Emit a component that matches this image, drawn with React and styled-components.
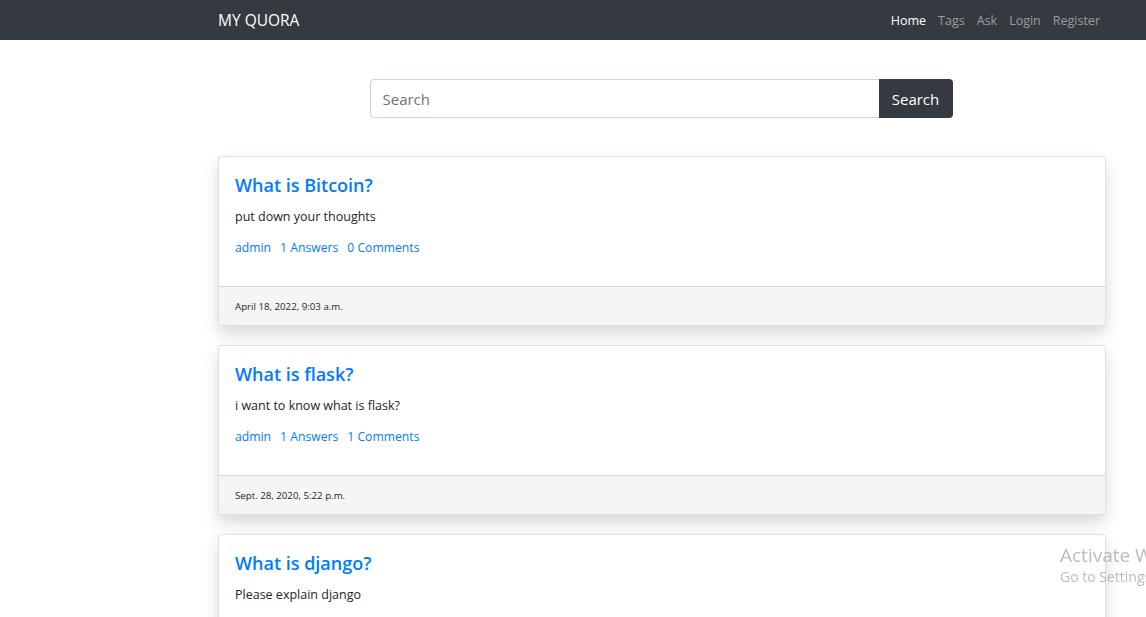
import React from "react";
import styled, { createGlobalStyle } from "styled-components";

const GlobalStyle = createGlobalStyle`
	* {
		box-sizing: border-box;
	}
	body {
		margin: 0;
		background: #fff;
		font-family: "Open Sans", "Liberation Sans", sans-serif;
		color: #212529;
		overflow: hidden;
	}
`;

const questions = [
	{
		title: "What is Bitcoin?",
		body: "put down your thoughts",
		author: "admin",
		answers: 1,
		comments: 0,
		date: "April 18, 2022, 9:03 a.m.",
	},
	{
		title: "What is flask?",
		body: "i want to know what is flask?",
		author: "admin",
		answers: 1,
		comments: 1,
		date: "Sept. 28, 2020, 5:22 p.m.",
	},
	{
		title: "What is django?",
		body: "Please explain django",
		author: "admin",
		answers: 1,
		comments: 0,
		date: "Sept. 27, 2020, 8:10 p.m.",
	},
];

const App = () => {
	const navLinks = ["Home", "Tags", "Ask", "Login", "Register"];

	return (
		<>
			<GlobalStyle />
			<Navbar>
				<NavInner>
					<Brand href="#">MY QUORA</Brand>
					<NavList>
						{navLinks.map((link, i) => (
							<NavLink key={link} href="#" $active={i === 0}>
								{link}
							</NavLink>
						))}
					</NavList>
				</NavInner>
			</Navbar>
			<Container>
				<SearchForm onSubmit={(e) => e.preventDefault()}>
					<SearchInput type="text" placeholder="Search" />
					<SearchButton type="submit">Search</SearchButton>
				</SearchForm>
				{questions.map((q) => (
					<Card key={q.title}>
						<CardBody>
							<CardTitle href="#">{q.title}</CardTitle>
							<CardText>{q.body}</CardText>
							<MetaRow>
								<MetaLink href="#">{q.author}</MetaLink>
								<MetaLink href="#">{q.answers} Answers</MetaLink>
								<MetaLink href="#">{q.comments} Comments</MetaLink>
							</MetaRow>
						</CardBody>
						<CardFooter>{q.date}</CardFooter>
					</Card>
				))}
			</Container>
			<Watermark>
				<WatermarkTitle>Activate Windows</WatermarkTitle>
				<WatermarkSub>Go to Settings to activate Windows.</WatermarkSub>
			</Watermark>
		</>
	);
};

export default App;

const Navbar = styled.nav`
	height: 40px;
	background: #343a40;
`;

const NavInner = styled.div`
	display: flex;
	align-items: center;
	justify-content: space-between;
	height: 100%;
	margin-left: 218px;
	width: 888px;
`;

const Brand = styled.a`
	color: #fff;
	font-size: 15.5px;
	text-decoration: none;
`;

const NavList = styled.div`
	display: flex;
	gap: 12px;
	padding-right: 6px;
`;

const NavLink = styled.a`
	color: ${(p) => (p.$active ? "#fff" : "rgba(255, 255, 255, 0.5)")};
	font-size: 12.5px;
	text-decoration: none;
`;

const Container = styled.main`
	margin-left: 218px;
	width: 888px;
	padding-top: 39px;
`;

const SearchForm = styled.form`
	display: flex;
	width: 583px;
	height: 39px;
	margin: 0 auto 38px;
	position: relative;
	left: -1px;
`;

const SearchInput = styled.input`
	flex: 1;
	height: 100%;
	padding: 0 12px;
	border: 1px solid #ced4da;
	border-right: none;
	border-radius: 4px 0 0 4px;
	font-family: inherit;
	font-size: 15px;
	color: #495057;
	outline: none;

	&::placeholder {
		color: #6c757d;
	}
`;

const SearchButton = styled.button`
	width: 74px;
	height: 100%;
	border: none;
	border-radius: 0 4px 4px 0;
	background: #343a40;
	color: #fff;
	font-family: inherit;
	font-size: 15px;
	cursor: pointer;
`;

const Card = styled.section`
	background: #fff;
	border: 1px solid rgba(0, 0, 0, 0.125);
	border-radius: 4px;
	box-shadow: 0 8px 16px rgba(0, 0, 0, 0.15);
	margin-bottom: 19px;
	overflow: hidden;
`;

const CardBody = styled.div`
	padding: 16px;
	height: 129px;
`;

const CardTitle = styled.a`
	display: block;
	color: #007bff;
	font-size: 18px;
	font-weight: 600;
	line-height: 24px;
	margin-bottom: 10px;
	text-decoration: none;
`;

const CardText = styled.p`
	margin: 0 0 11px;
	font-size: 12.5px;
	line-height: 20px;
`;

const MetaRow = styled.div`
	display: flex;
	gap: 9px;
	line-height: 20px;
`;

const MetaLink = styled.a`
	color: #007bff;
	font-size: 12.2px;
	text-decoration: none;
`;

const CardFooter = styled.footer`
	height: 39px;
	display: flex;
	align-items: center;
	padding: 0 16px;
	background: #f5f5f5;
	border-top: 1px solid rgba(0, 0, 0, 0.125);
	font-size: 9.7px;
	color: #212529;
`;

const Watermark = styled.div`
	position: fixed;
	left: 1060px;
	top: 543px;
	white-space: nowrap;
	color: rgba(160, 160, 160, 0.7);
	pointer-events: none;
`;

const WatermarkTitle = styled.div`
	font-size: 19px;
	line-height: 24px;
`;

const WatermarkSub = styled.div`
	font-size: 14px;
	line-height: 20px;
`;
